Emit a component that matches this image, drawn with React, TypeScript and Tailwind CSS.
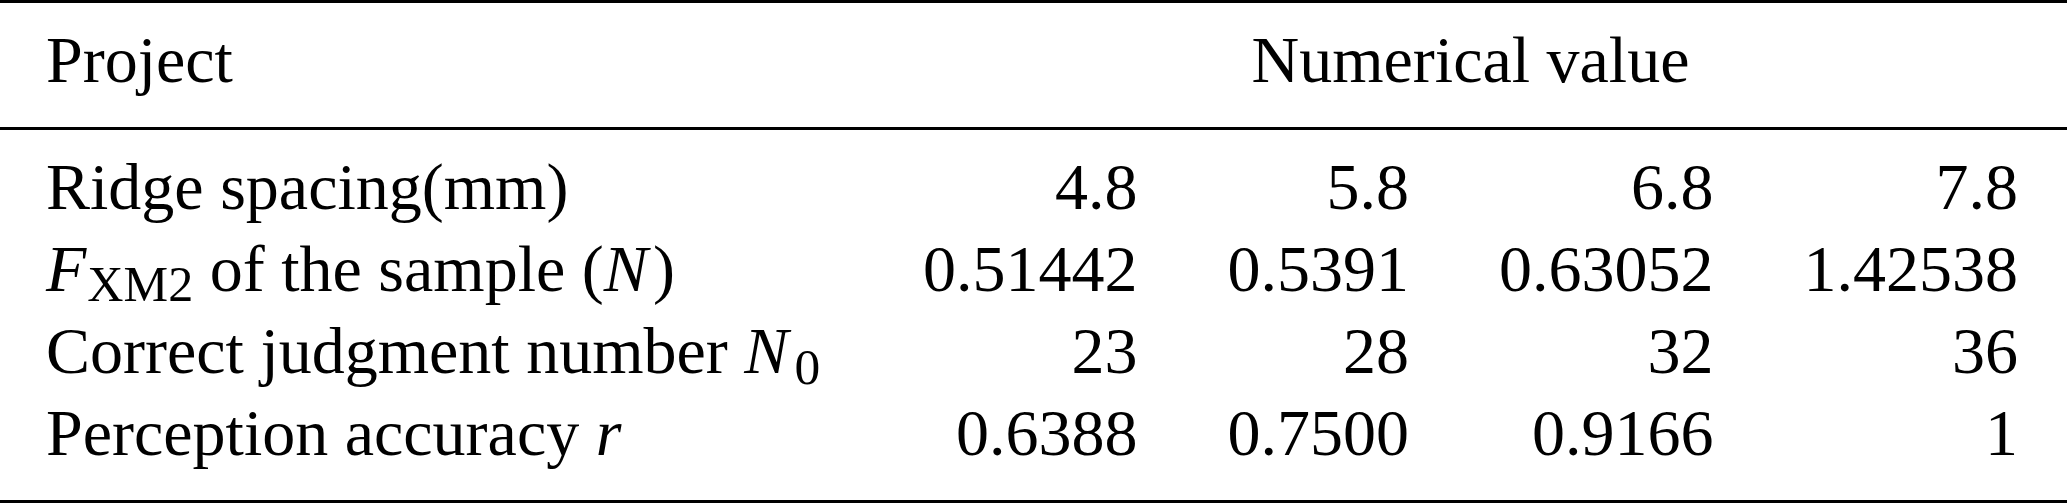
import React from "react";

type Row = {
  label: React.ReactNode;
  values: string[];
};

const Sub = ({ children, gap }: { children: React.ReactNode; gap?: boolean }) => (
  <span className={gap ? "text-[0.78em] leading-[0] align-[-0.22em] ml-[0.12em]" : "text-[0.76em] leading-[0] align-[-0.2em] ml-[0.02em]"}>
    {children}
  </span>
);

const rows: Row[] = [
  { label: "Ridge spacing(mm)", values: ["4.8", "5.8", "6.8", "7.8"] },
  {
    label: (
      <>
        <i>F</i>
        <Sub>XM2</Sub> of the sample (<i className="mr-[0.08em]">N</i>)
      </>
    ),
    values: ["0.51442", "0.5391", "0.63052", "1.42538"],
  },
  {
    label: (
      <>
        Correct judgment number <i>N</i>
        <Sub gap>0</Sub>
      </>
    ),
    values: ["23", "28", "32", "36"],
  },
  {
    label: (
      <>
        Perception accuracy <i>r</i>
      </>
    ),
    values: ["0.6388", "0.7500", "0.9166", "1"],
  },
];

export default function App() {
  return (
    <div className="w-[2067px] h-[503px] bg-white text-black font-['Liberation_Serif',serif] text-[66px] leading-[82px] whitespace-nowrap">
      <div className="grid grid-cols-[1fr_auto_auto_auto_auto] border-t-[3px] border-b-[3px] border-black">
        <div className="col-span-5 h-[16px]" />
        <div className="pl-[46px]">Project</div>
        <div className="col-span-4 text-center pl-[45px] pr-[49px]">Numerical value</div>
        <div className="col-span-5 h-[26px]" />
        <div className="col-span-5 h-[3px] bg-black" />
        <div className="col-span-5 h-[16px]" />
        {rows.map((row, i) => (
          <React.Fragment key={i}>
            <div className="pl-[46px]">{row.label}</div>
            {row.values.map((v, j) => (
              <div
                key={j}
                className={
                  j === 3 ? "text-right pl-[45px] pr-[49px]" : "text-right px-[45px]"
                }
              >
                {v}
              </div>
            ))}
          </React.Fragment>
        ))}
        <div className="col-span-5 h-[26px]" />
      </div>
    </div>
  );
}
